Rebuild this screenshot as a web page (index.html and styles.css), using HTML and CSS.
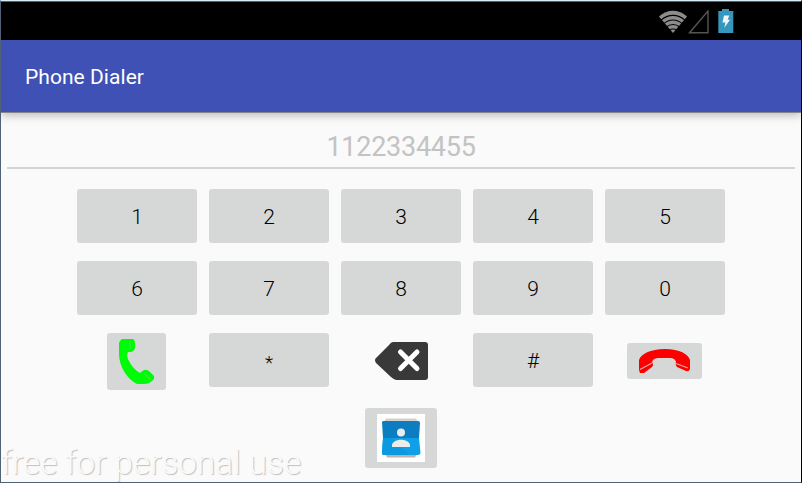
FILE: index.html
```
<!DOCTYPE html>
<html lang="en">
<head>
<meta charset="utf-8">
<title>Phone Dialer</title>
<link rel="stylesheet" href="styles.css">
</head>
<body>
<div class="window">
  <div class="status-bar">
    <svg class="wifi" width="30" height="24" viewBox="0 0 32 24" preserveAspectRatio="none">
      <path d="M1 6.5C10 -1.2 22 -1.2 31 6.5L16 23Z" fill="#8c8c8c"/>
      <g fill="none" stroke="#000" stroke-width="1.1">
        <path d="M3 10.3C11 3.7 21 3.7 29 10.3"/>
        <path d="M6 13.8C12 8.7 20 8.7 26 13.8"/>
        <path d="M9 17C13 13.6 19 13.6 23 17"/>
        <path d="M12 20.2C14 18.5 18 18.5 20 20.2"/>
      </g>
    </svg>
    <svg class="signal" width="22" height="24" viewBox="0 0 22 24">
      <path d="M1.5 22.7L20 1V22.7Z" fill="none" stroke="#555" stroke-width="1.4"/>
    </svg>
    <svg class="battery" width="16" height="24" viewBox="0 0 16 24">
      <path d="M4 0H11V2H15.3V24H.3V2H4Z" fill="#3597bd"/>
      <path d="M6 6.5H11.3L9.6 10.7H12L6.3 18.7L7.4 13.4H4.4Z" fill="#eef6f8"/>
    </svg>
  </div>
  <header class="app-bar"><h1>Phone Dialer</h1></header>
  <main class="content">
    <div class="number">1122334455</div>
    <div class="keypad">
      <button class="key">1</button>
      <button class="key">2</button>
      <button class="key">3</button>
      <button class="key">4</button>
      <button class="key">5</button>
      <button class="key">6</button>
      <button class="key">7</button>
      <button class="key">8</button>
      <button class="key">9</button>
      <button class="key">0</button>
      <button class="key icon-key call" aria-label="Call">
        <svg width="35" height="45" viewBox="0 0 35 45">
          <path d="M3 0H14Q16 1 16 4V9Q15 13 11 13H9Q7 17 10 22Q14 30 21 34Q23 32 25 31Q28 30 31 33L35 37V40Q31 45 25 45H18C8 40 0 27 0 15V4Q1 1 3 0Z" fill="#00fb08"/>
          <path d="M11 2V11M25 34L32 41" fill="none" stroke="#2cf02c" stroke-width="1.5"/>
        </svg>
      </button>
      <button class="key star">*</button>
      <button class="icon-key backspace" aria-label="Delete">
        <svg width="53" height="38" viewBox="0 0 53 38">
          <path d="M18 0H50Q53 0 53 3V35Q53 38 50 38H21Q18 37 16 35L1 21Q-1 18 1 16L14 3Q16 0 18 0Z" fill="#393939"/>
          <path d="M25.500 10L42 26.500M42 10L25.500 26.500" stroke="#fff" stroke-width="5" stroke-linecap="round" fill="none"/>
        </svg>
      </button>
      <button class="key">#</button>
      <button class="key icon-key hangup" aria-label="Hang up">
        <svg width="51" height="24" viewBox="0 0 51 24">
          <path d="M0 11C2 5 11 0 26 0S49 5 51 11V20Q50 23 47 22L38 18Q36 16 37 13Q36 9 31 9H20Q14 9 13 13Q15 16 13 18L5 24H1L0 21Z" fill="#fc0000"/>
          <path d="M1 20.500L13 14M37 14.500L49 19" fill="none" stroke="#e8a5a3" stroke-width="1.3"/>
        </svg>
      </button>
      <button class="key icon-key contacts" aria-label="Contacts">
        <svg width="48" height="48" viewBox="0 0 48 48">
          <path fill="#fff" d="M0 0H48V48H0Z"/>
          <path d="M9 4.500H39L42 9H6Z" fill="#d5d0cc"/>
          <path d="M7 38H41L38 43.500H10Z" fill="#bcb1ab"/>
          <path d="M5 8Q5 7 7 7H41Q43 7 43 9L42 24H6Z" fill="#0d7dc1"/>
          <path d="M6 24H42L43.500 39Q43 41 41 41H7Q4.500 41 5 38Z" fill="#10a0e7"/>
          <path d="M6 24H15L32 41H7Q4.500 41 5 38Z" fill="#0b9ae0"/>
          <circle cx="24" cy="18.500" r="4" fill="#ececec"/>
          <path d="M15 33V30.500C17 24 31 24 33 30.500V33Z" fill="#ececec"/>
        </svg>
      </button>
    </div>
  </main>
  <div class="watermark">free for personal use</div>
</div>
</body>
</html>
```
FILE: styles.css
```
* { box-sizing: border-box; }

body {
  margin: 0;
  background: #fafafa;
  font-family: Roboto, sans-serif;
}

.window {
  position: relative;
  width: 802px;
  height: 483px;
  overflow: hidden;
  background: #fafafa;
  border-style: solid;
  border-width: 1px;
  border-color: #d5ecf8 #000 #526276 #526276;
}

.status-bar {
  display: flex;
  align-items: flex-start;
  height: 39px;
  padding: 8px 67px 0 0;
  justify-content: flex-end;
  background: #000;
  border-top: 1px solid #526276;
}

.battery { margin: -1px 0 0 8px; }

.app-bar {
  display: flex;
  align-items: center;
  height: 72px;
  padding-left: 24px;
  background: #3f51b5;
  box-shadow: 0 1px 0 #85858b, 0 3px 9px rgba(0, 0, 0, .28);
}

.app-bar h1 {
  margin: 0;
  padding-top: 1px;
  color: #fff;
  font-size: 21px;
  font-weight: 400;
  line-height: 24px;
  letter-spacing: .05px;
}

.number {
  height: 57px;
  margin: 0 6px;
  padding-top: 19px;
  border-bottom: 2px solid #d3d4d4;
  color: #c3c3c3;
  font-size: 27px;
  font-weight: 400;
  line-height: 32px;
  letter-spacing: -.25px;
  text-align: center;
}

.keypad {
  display: grid;
  grid-template-columns: repeat(5, 120px);
  grid-template-rows: 54px 54px 57px 60px;
  gap: 18px 12px;
  width: 648px;
  margin: 20px 0 0 76px;
}

.key {
  height: 54px;
  padding: 2px 0 0;
  border: 0;
  border-radius: 3px;
  background: #d6d8d7;
  color: #000;
  font: 300 21px/24px Roboto, sans-serif;
}

.star { padding-top: 6px; font-size: 19px; }

.icon-key {
  display: flex;
  align-items: center;
  justify-content: center;
  justify-self: center;
  padding: 0;
}

.call { width: 59px; height: 57px; margin-right: 1px; }

.backspace {
  width: 53px;
  height: 38px;
  margin: 9px 0 0 1px;
  border: 0;
  background: none;
}

.hangup { width: 75px; height: 36px; margin: 10px 1px 0 0; }

.contacts { grid-column: 3; width: 72px; height: 60px; }

.watermark {
  position: absolute;
  left: 0;
  bottom: -2px;
  color: #fafafa;
  font-size: 33.3px;
  font-weight: 300;
  line-height: 42px;
  white-space: nowrap;
  text-shadow: 1px 1px 1px #c0c0c0;
}
```
